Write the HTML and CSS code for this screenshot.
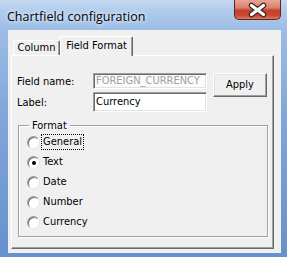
FILE: index.html
```
<html>
  <head>
    <meta charset="utf-8">
    <title>Chartfield configuration</title>
    <link rel="stylesheet" href="styles.css">
  </head>
  <body>
    <div class="window">
      <div class="titlebar">
        <span class="title">Chartfield configuration</span>
        <span class="close">
          <svg width="47" height="20" viewBox="0 0 47 20">
            <path d="M17.5 5.5 L29.5 14.5 M29.5 5.5 L17.5 14.5" stroke="#3a2622" stroke-width="5.5" stroke-linecap="round"/>
            <path d="M17.5 5.5 L29.5 14.5 M29.5 5.5 L17.5 14.5" stroke="#ffffff" stroke-width="3.2" stroke-linecap="round"/>
          </svg>
        </span>
      </div>
      <div class="client">
        <div class="tabs">
          <span class="tab">Column</span>
          <span class="tab active">Field Format</span>
        </div>
        <div class="page">
          <div class="top">
            <div class="fields">
              <div class="field"><span class="lbl">Field name:</span><span class="box disabled">FOREIGN_CURRENCY</span></div>
              <div class="field"><span class="lbl">Label:</span><span class="box tall">Currency</span></div>
            </div>
            <span class="btn">Apply</span>
          </div>
          <fieldset class="group">
            <legend>Format</legend>
            <div class="opt"><span class="radio"></span><span class="txt focus">General</span></div>
            <div class="opt"><span class="radio on"></span><span class="txt">Text</span></div>
            <div class="opt"><span class="radio"></span><span class="txt">Date</span></div>
            <div class="opt"><span class="radio"></span><span class="txt">Number</span></div>
            <div class="opt"><span class="radio"></span><span class="txt">Currency</span></div>
          </fieldset>
        </div>
      </div>
    </div>
  </body>
</html>
```
FILE: styles.css
```
body { margin: 0; }

.window {
  width: 287px;
  height: 257px;
  box-sizing: border-box;
  padding: 0 6px 0 8px;
  background: linear-gradient(180deg, #c4d9f1 0, #b2cced 10px, #9cbce5 30px, #7fa6da 120px, #6791cc 257px);
  font-family: "DejaVu Sans Condensed", "Liberation Sans", sans-serif;
  font-size: 11px;
  color: #000;
}

.titlebar {
  height: 30px;
  display: flex;
  justify-content: space-between;
  margin-left: -8px;
  margin-right: -6px;
}
.title {
  align-self: center;
  margin: 3px 0 0 7px;
  font-family: "Open Sans", "Liberation Sans", sans-serif;
  font-size: 12.5px;
  color: #000;
  text-shadow: 0 0 6px #e8f1fb, 0 0 3px #e8f1fb;
}
.close {
  align-self: flex-start;
  width: 47px;
  height: 20px;
  margin-right: 6px;
  box-sizing: border-box;
  border: 1px solid #5a2a22;
  border-top: none;
  border-radius: 0 0 5px 5px;
  background: linear-gradient(180deg, #e9a595 0, #d9826d 40%, #c2412b 55%, #c8472f 80%, #e07a55 100%);
  display: flex;
  align-items: center;
  justify-content: center;
}
.close svg { display: block; margin: -1px; }

.client {
  height: 223px;
  background: #f0f0f0;
  padding: 6px 5px 0 3px;
  box-sizing: border-box;
}

.tabs {
  display: flex;
  align-items: flex-end;
  height: 19px;
  padding-left: 2px;
}
.tab {
  box-sizing: border-box;
  height: 15px;
  width: 47px;
  border: 1px solid;
  border-color: #fff #696969 transparent #fff;
  border-bottom: none;
  border-radius: 2px 2px 0 0;
  box-shadow: inset -1px 0 #a0a0a0;
  text-align: center;
  line-height: 13px;
  background: #f0f0f0;
}
.tab.active {
  position: relative;
  z-index: 1;
  width: 73px;
  height: 20px;
  margin-bottom: -1px;
  line-height: 18px;
  padding-bottom: 2px;
}

.page {
  box-sizing: border-box;
  height: 194px;
  margin-right: 2px;
  border: 1px solid;
  border-color: #fff #696969 #696969 #fff;
  box-shadow: inset -1px -1px #a0a0a0;
  padding: 17px 0 0 5px;
}

.top { display: flex; }
.fields { display: flex; flex-direction: column; gap: 3px; }
.field { display: flex; align-items: center; }
.lbl { width: 76px; }
.box {
  box-sizing: border-box;
  width: 114px;
  height: 16px;
  border: 1px solid;
  border-color: #a0a0a0 #fff #fff #a0a0a0;
  box-shadow: inset 1px 1px #696969, inset -1px -1px #e3e3e3;
  background: #fff;
  padding-left: 2px;
  line-height: 14px;
  white-space: nowrap;
  overflow: hidden;
}
.box.disabled { color: #a0a0a0; background: #fbfbfb; }
.box.tall { height: 20px; line-height: 18px; }

.btn {
  box-sizing: border-box;
  width: 54px;
  height: 24px;
  margin-left: 6px;
  border: 1px solid;
  border-color: #fff #696969 #696969 #fff;
  box-shadow: inset -1px -1px #a0a0a0, inset 1px 1px #e3e3e3;
  text-align: center;
  line-height: 22px;
}

.group {
  margin: 7px 0 0 1px;
  width: 250px;
  box-sizing: border-box;
  border: 1px solid #a0a0a0;
  box-shadow: inset 1px 1px #fff, 1px 1px #fff;
  padding: 0 0 4px 7px;
}
.group legend {
  margin-left: 3px;
  padding: 0 3px;
  line-height: 13px;
}

.opt { display: flex; align-items: center; height: 20px; }
.radio {
  box-sizing: border-box;
  width: 13px;
  height: 13px;
  margin: 0 1px 0 1px;
  border-radius: 50%;
  border: 1px solid;
  border-color: #9a9a9a #e6e6e6 #e6e6e6 #9a9a9a;
  box-shadow: inset 1px 1px #707070;
  background: #fff;
  display: flex;
  align-items: center;
  justify-content: center;
}
.radio.on::after {
  content: "";
  width: 4px;
  height: 4px;
  border-radius: 50%;
  background: #000;
  margin: 1px 0 0 1px;
}
.txt {
  border: 1px dotted transparent;
  padding: 0 1px;
  line-height: 14px;
}
.txt.focus { border-color: #000; }
```
